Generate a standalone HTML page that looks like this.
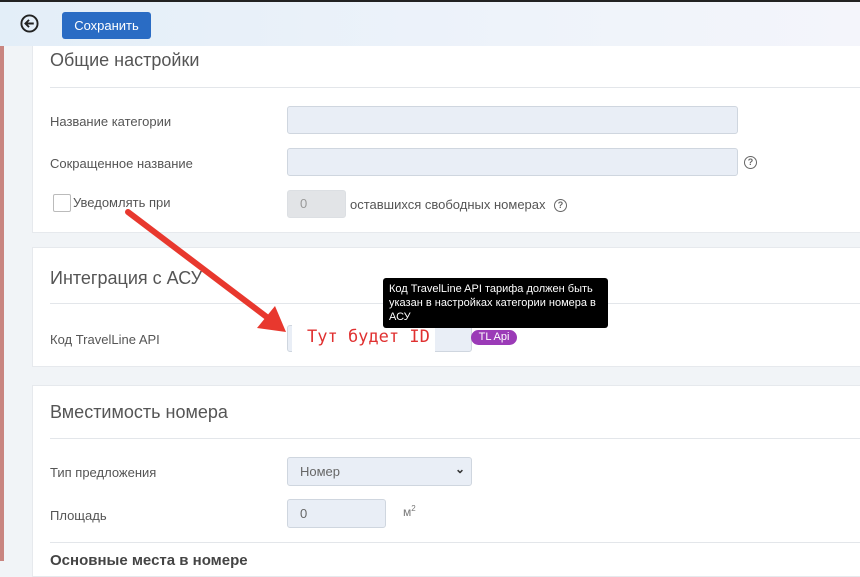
<!DOCTYPE html>
<html><head><meta charset="utf-8"><style>
body{margin:0;width:860px;height:561px;overflow:hidden;background:#f1f4f7;font-family:"Liberation Sans","Noto Sans CJK SC",sans-serif;position:relative;color:#444}
.strip{position:absolute;left:0;top:40px;width:4px;height:521px;background:#c98580}
.top{position:absolute;left:0;top:0;width:860px;height:46px;background:linear-gradient(90deg,#e3eef8,#eef3fa 60%,#f4f5fb);border-top:2px solid #222;box-sizing:border-box}
.back{position:absolute;left:20px;top:12px;width:19px;height:19px}
.btn{position:absolute;left:62px;top:10px;width:89px;height:27px;background:#2a6cc4;border-radius:3px;color:#fff;font-size:13px;line-height:27px;text-align:center}
.card{position:absolute;left:32px;width:840px;background:#fff;border:1px solid #e6e9ed}
.h{position:absolute;left:17px;font-size:18px;color:#555}
.hr{position:absolute;left:17px;right:0;height:1px;background:#e3e6ea}
.l{position:absolute;left:17px;font-size:13px;color:#555}
.in{position:absolute;background:#e9eef6;border:1px solid #cfd6df;border-radius:3px;box-sizing:border-box;font-size:13px;color:#666;padding-left:12px}
.q{position:absolute;width:11px;height:11px;border:1.5px solid #666;border-radius:50%;font-size:9px;line-height:11px;text-align:center;font-weight:bold;color:#666}
</style></head><body>
<div class="strip"></div>
<div class="top">
<svg class="back" viewBox="0 0 20 20"><circle cx="10" cy="10" r="8.5" fill="none" stroke="#222" stroke-width="2"/><path d="M14.5 10H6M9.5 6.2L5.7 10l3.8 3.8" fill="none" stroke="#222" stroke-width="2"/></svg>
<div class="btn">Сохранить</div>
</div>
<div class="card" style="top:46px;height:186px;border-top:none">
<div class="h" style="top:4px">Общие настройки</div>
<div class="hr" style="top:41px"></div>
<div class="l" style="top:68px">Название категории</div>
<div class="in" style="left:254px;top:60px;width:451px;height:28px"></div>
<div class="l" style="top:110px">Сокращенное название</div>
<div class="in" style="left:254px;top:102px;width:451px;height:28px"></div>
<div class="q" style="left:711px;top:110px">?</div>
<div style="position:absolute;left:20px;top:148px;width:16px;height:16px;border:1px solid #bbb;border-radius:2px"></div>
<div class="l" style="top:149px;left:40px">Уведомлять при</div>
<div class="in" style="left:254px;top:144px;width:59px;height:28px;background:#e2e4e7;border-color:#dcdfe3;line-height:26px;color:#999">0</div>
<div class="l" style="top:151px;left:317px">оставшихся свободных номерах</div>
<div class="q" style="left:521px;top:153px">?</div>
</div>
<div class="card" style="top:247px;height:118px">
<div class="h" style="top:20px">Интеграция с АСУ</div>
<div class="hr" style="top:55px"></div>
<div class="l" style="top:84px">Код TravelLine API</div>
<div class="in" style="left:254px;top:77px;width:185px;height:27px"></div>
<div style="position:absolute;left:259px;top:74px;width:143px;height:31px;background:#fff;color:#e03030;font-size:17px;font-family:'DejaVu Sans Mono',monospace;line-height:30px;padding-left:15px;box-sizing:border-box">Тут будет ID</div>
<div style="position:absolute;left:438px;top:82px;width:46px;height:15px;background:#9b3bb7;border-radius:8px;color:#fff;font-size:11px;line-height:15px;text-align:center">TL Api</div>
</div>
<div style="position:absolute;left:383px;top:278px;width:225px;height:50px;background:#000;border-radius:3px;color:#fff;font-size:11px;line-height:14px;padding:4px 0 0 6px;box-sizing:border-box;overflow:hidden">Код TravelLine API тарифа должен быть указан в настройках категории номера в АСУ</div>
<div class="card" style="top:385px;height:190px">
<div class="h" style="top:16px">Вместимость номера</div>
<div class="hr" style="top:52px"></div>
<div class="l" style="top:79px">Тип предложения</div>
<div class="in" style="left:254px;top:71px;width:185px;height:29px;line-height:27px">Номер<span style="position:absolute;right:6px;top:-2px;font-size:12px;font-weight:bold;color:#333">&#8964;</span></div>
<div class="l" style="top:122px">Площадь</div>
<div class="in" style="left:254px;top:113px;width:99px;height:29px;line-height:27px">0</div>
<div class="l" style="top:118px;left:370px;font-size:12px;color:#777">м<sup style="font-size:8px">2</sup></div>
<div class="hr" style="top:156px"></div>
<div class="l" style="top:166px;font-size:15px;font-weight:bold;color:#444">Основные места в номере</div>
</div>
<svg style="position:absolute;left:0;top:0" width="860" height="561"><path d="M128 212L268 318" stroke="#e8382e" stroke-width="6" stroke-linecap="round"/><path d="M286 332L257 328L275 306Z" fill="#e8382e"/></svg>
</body></html>
